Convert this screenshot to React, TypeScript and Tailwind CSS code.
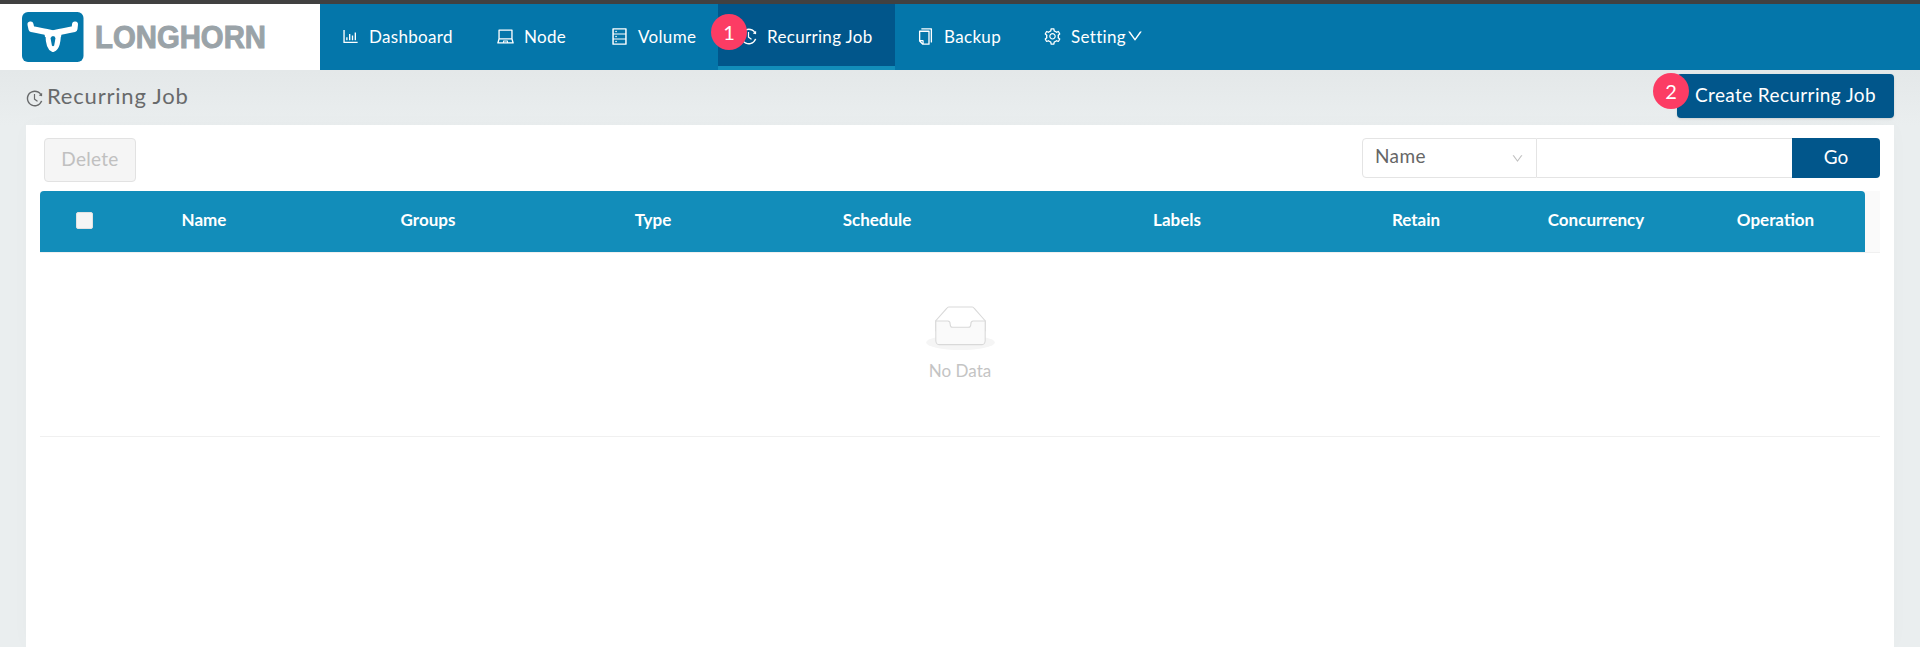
import type { ReactNode } from "react";
import {
  AiOutlineBarChart,
  AiOutlineCopy,
  AiOutlineDatabase,
  AiOutlineDown,
  AiOutlineHistory,
  AiOutlineLaptop,
  AiOutlineSetting,
} from "react-icons/ai";

function Logo() {
  return (
    <svg className="ml-[22px] block h-[50px] w-[270px] overflow-visible" viewBox="0 0 270 50">
      <rect width="61.5" height="50" rx="6" fill="#0478ab" />
      <g fill="none" stroke="#fff" strokeLinecap="round" strokeLinejoin="round">
        <path d="M8.500 12.500 L9.500 17 C17 18.500 24 19.500 31 21.500 C38 19.500 45 18.500 52.500 17 L53 12.500" strokeWidth="6" />
        <path d="M26.500 23 C26.500 29 27 35.500 31 37 C35 35.500 35.500 29 36 23" strokeWidth="6" />
      </g>
      <path d="M22 19 L31 21.500 L40 19 L39 25 L33.500 25 L31 23.500 L28.500 25 L23 25 Z" fill="#fff" />
      <path d="M28.500 26 Q31 22.500 33.500 26 L32.200 33.500 Q31 35 29.900 33.500 Z" fill="#0478ab" />
      <text
        x="73"
        y="35.500"
        textLength="171"
        lengthAdjust="spacingAndGlyphs"
        className="fill-[#9aa3a8] font-['Liberation_Sans',sans-serif] text-[31px] font-bold"
        stroke="#9aa3a8"
        strokeWidth="1"
      >
        LONGHORN
      </text>
    </svg>
  );
}

function NavItem({ icon, width, active, children }: { icon: ReactNode; width: string; active?: boolean; children: ReactNode }) {
  return (
    <a
      className={`flex h-[66px] shrink-0 items-center gap-[9px] whitespace-nowrap border-b-4 pl-[21px] pt-[3px] text-[17px] tracking-[0.32px] text-white ${width} ${
        active ? "border-[#128dba] bg-[#01568b]" : "border-transparent"
      }`}
    >
      <span className="-mt-px shrink-0 text-[19px]">{icon}</span>
      <span className="flex items-center">{children}</span>
    </a>
  );
}

function Badge({ className, children }: { className: string; children: ReactNode }) {
  return (
    <span
      className={`absolute flex size-9 items-center justify-center rounded-full bg-[#fc3c64] pb-px text-[20px] text-white ${className}`}
    >
      {children}
    </span>
  );
}

function EmptyBox() {
  return (
    <svg className="h-[44px] w-[69px]" viewBox="0 0 64 41">
      <g transform="translate(0 1)" fill="none" fillRule="evenodd">
        <ellipse fill="#f5f5f5" cx="32" cy="33" rx="32" ry="7" />
        <g fillRule="nonzero" stroke="#d9d9d9">
          <path d="M55 12.76L44.854 1.258C44.367.474 43.656 0 42.907 0H21.093c-.749 0-1.46.474-1.947 1.257L9 12.761V22h46v-9.24z" fill="#fff" />
          <path
            d="M41.613 15.931c0-1.605.994-2.93 2.227-2.931H55v18.137C55 33.260 53.680 35 52.050 35h-40.100C10.320 35 9 33.259 9 31.137V13h11.160c1.233 0 2.227 1.323 2.227 2.928v.022c0 1.605 1.005 2.901 2.237 2.901h14.752c1.232 0 2.237-1.308 2.237-2.913v-.007z"
            fill="#fafafa"
          />
        </g>
      </g>
    </svg>
  );
}

const columns = [
  { title: "Name", width: "w-[150px]" },
  { title: "Groups", width: "w-[298px]" },
  { title: "Type", width: "w-[152px]" },
  { title: "Schedule", width: "w-[296px]" },
  { title: "Labels", width: "w-[304px]" },
  { title: "Retain", width: "w-[174px]" },
  { title: "Concurrency", width: "w-[186px]" },
  { title: "Operation", width: "w-[176px] pr-[3px]" },
];

export default function App() {
  return (
    <div className="flex h-[647px] w-full flex-col overflow-hidden bg-[#eaeeef] font-[Lato,sans-serif]">
      <header className="flex h-[70px] shrink-0 border-t-4 border-[#414141] bg-[#0476aa]">
        <div className="flex w-[320px] shrink-0 items-center bg-white">
          <Logo />
        </div>
        <nav className="flex">
          <NavItem width="w-[155px]" icon={<AiOutlineBarChart />}>Dashboard</NavItem>
          <NavItem width="w-[114px]" icon={<AiOutlineLaptop />}>Node</NavItem>
          <NavItem width="w-[129px]" icon={<AiOutlineDatabase className="scale-x-110" />}>Volume</NavItem>
          <div className="relative">
            <NavItem active width="w-[177px]" icon={<AiOutlineHistory />}>Recurring Job</NavItem>
            <Badge className="left-[-7px] top-[10px]">1</Badge>
          </div>
          <NavItem width="w-[127px]" icon={<AiOutlineCopy />}>Backup</NavItem>
          <NavItem width="w-[140px]" icon={<AiOutlineSetting />}>
            Setting
            <AiOutlineDown className="-mt-px text-[18px]" />
          </NavItem>
        </nav>
      </header>

      <div className="flex h-[55px] shrink-0 items-start justify-between bg-linear-to-b from-[#e4e8e9] to-[#eaeeef] pl-[25px] pr-[26px] pt-1">
        <h1 className="flex items-center gap-[3px] pt-[8px] text-[22px] leading-[28px] tracking-[0.800px] text-[#686a6b]">
          <AiOutlineHistory className="mt-[4px] text-[19px]" />
          Recurring Job
        </h1>
        <div className="relative">
          <button className="h-11 w-[217px] whitespace-nowrap rounded-[4px] bg-[#01568b] pb-px text-[19px] tracking-[0.380px] text-white shadow-sm">
            Create Recurring Job
          </button>
          <Badge className="left-[-24px] top-[-1px]">2</Badge>
        </div>
      </div>

      <main className="mx-[26px] flex-1 bg-white px-[14px] pt-[13px] shadow-[0_0_20px_rgba(0,0,0,0.02)]">
        <div className="flex h-[53px] items-start justify-between pl-1">
          <button className="h-11 w-[92px] rounded-[4px] border border-[#e2e2e2] bg-[#f5f5f5] pb-px text-[19px] tracking-[0.300px] text-[#c0c0c0]">
            Delete
          </button>
          <div className="flex h-10">
            <div className="flex w-[175px] items-center justify-between rounded-l-[4px] border border-[#e4e4e4] px-[12px] text-[19px] tracking-[0.400px] text-[#666]">
              <span className="-mt-[3px]">Name</span>
              <AiOutlineDown className="text-[13px] text-[#c0c0c0]" />
            </div>
            <input className="w-[255px] border-y border-[#e4e4e4] outline-none" />
            <button className="w-[88px] rounded-r-[4px] bg-[#01568b] pb-px text-[19px] text-white">Go</button>
          </div>
        </div>

        <div className="flex h-[62px] border-b border-[#f0f0f0] bg-[#fafafa]">
          <div className="flex h-[61px] w-[1825px] shrink-0 items-center rounded-t-[4px] bg-[#128dba] pb-[2px]">
            <div className="flex w-[89px] justify-center">
              <span className="size-[17px] rounded-[2px] border border-[#e2e2e2] bg-[#f5f5f5]" />
            </div>
            {columns.map((column) => (
              <div key={column.title} className={`pb-[2px] text-center text-[17px] leading-6 font-bold text-white ${column.width}`}>
                {column.title}
              </div>
            ))}
          </div>
        </div>
        <div className="flex h-[184px] flex-col items-center border-b border-[#f0f0f0] pt-[53px] text-[17px] leading-6 tracking-[0.050px] text-[#c4c4c4]">
          <EmptyBox />
          <p className="mt-[9px]">No Data</p>
        </div>
      </main>
    </div>
  );
}
